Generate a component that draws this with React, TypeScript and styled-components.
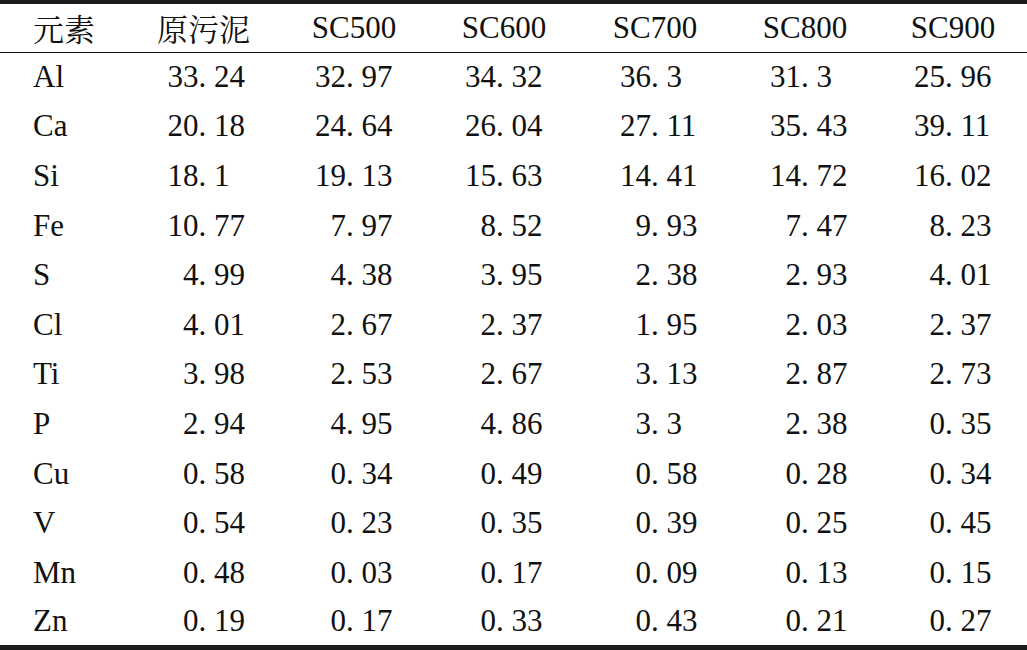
import React from 'react';
import styled, { createGlobalStyle } from 'styled-components';

const GlobalStyle = createGlobalStyle`
  html, body {
    margin: 0;
    padding: 0;
    background: #ffffff;
  }
  body {
    font-family: "Liberation Serif", serif;
    color: #111;
  }
`;

const Table = styled.table`
  width: 1027px;
  table-layout: fixed;
  border-collapse: collapse;
  border-top: 4px solid #1c1c1c;
  border-bottom: 5px solid #1c1c1c;
  font-family: "Liberation Serif", serif;
  font-size: 31px;
`;

const HeadCell = styled.th<{ $first?: boolean }>`
  height: 47px;
  padding: 0 0 1px ${(p) => (p.$first ? '33px' : '0')};
  font-family: "Liberation Serif", serif;
  font-weight: normal;
  text-align: ${(p) => (p.$first ? 'left' : 'center')};
  vertical-align: middle;
  border-bottom: 1.5px solid #111;
  white-space: nowrap;
`;

const Cjk = styled.span`
  font-family: "Noto Serif CJK SC", "Noto Sans CJK SC", serif;
`;

const Row = styled.tr`
  height: 49.6px;
`;

const Cell = styled.td<{ $first?: boolean; $shift?: number }>`
  padding: 0 0 1px ${(p) => (p.$first ? '33px' : `${(p.$shift ?? 0) * 2}px`)};
  font-family: "Liberation Serif", serif;
  text-align: ${(p) => (p.$first ? 'left' : 'center')};
  vertical-align: middle;
  white-space: nowrap;
`;

const NumBox = styled.span<{ $pad: boolean }>`
  display: inline-block;
  width: 78px;
  text-align: left;
  padding-left: ${(p) => (p.$pad ? '0.5em' : '0')};
  box-sizing: border-box;
`;

const Dot = styled.span`
  margin-right: 0.25em;
`;

const widths = [128, 151, 150, 150, 152, 148, 148];
const shifts = [0, 3, 0, 0, 4, 4, 0];

const headers = ['元素', '原污泥', 'SC500', 'SC600', 'SC700', 'SC800', 'SC900'];

const rows: [string, string[]][] = [
  ['Al', ['33.24', '32.97', '34.32', '36.3', '31.3', '25.96']],
  ['Ca', ['20.18', '24.64', '26.04', '27.11', '35.43', '39.11']],
  ['Si', ['18.1', '19.13', '15.63', '14.41', '14.72', '16.02']],
  ['Fe', ['10.77', '7.97', '8.52', '9.93', '7.47', '8.23']],
  ['S', ['4.99', '4.38', '3.95', '2.38', '2.93', '4.01']],
  ['Cl', ['4.01', '2.67', '2.37', '1.95', '2.03', '2.37']],
  ['Ti', ['3.98', '2.53', '2.67', '3.13', '2.87', '2.73']],
  ['P', ['2.94', '4.95', '4.86', '3.3', '2.38', '0.35']],
  ['Cu', ['0.58', '0.34', '0.49', '0.58', '0.28', '0.34']],
  ['V', ['0.54', '0.23', '0.35', '0.39', '0.25', '0.45']],
  ['Mn', ['0.48', '0.03', '0.17', '0.09', '0.13', '0.15']],
  ['Zn', ['0.19', '0.17', '0.33', '0.43', '0.21', '0.27']],
];

// 小数点后留出一点间距，个位数整数前补一个数字宽度
const Num: React.FC<{ value: string }> = ({ value }) => {
  const [int, frac] = value.split('.');
  return (
    <NumBox $pad={int.length === 1}>
      {int}
      <Dot>.</Dot>
      {frac}
    </NumBox>
  );
};

const App: React.FC = () => {
  return (
    <>
      <GlobalStyle />
      <Table>
        <colgroup>
          {widths.map((w, i) => (
            <col key={i} style={{ width: w }} />
          ))}
        </colgroup>
        <thead>
          <tr>
            {headers.map((h, i) => (
              <HeadCell key={h} $first={i === 0}>
                {i < 2 ? <Cjk>{h}</Cjk> : h}
              </HeadCell>
            ))}
          </tr>
        </thead>
        <tbody>
          {rows.map(([el, vals]) => (
            <Row key={el}>
              <Cell $first>{el}</Cell>
              {vals.map((v, i) => (
                <Cell key={i} $shift={shifts[i + 1]}>
                  <Num value={v} />
                </Cell>
              ))}
            </Row>
          ))}
        </tbody>
      </Table>
    </>
  );
};

export default App;
